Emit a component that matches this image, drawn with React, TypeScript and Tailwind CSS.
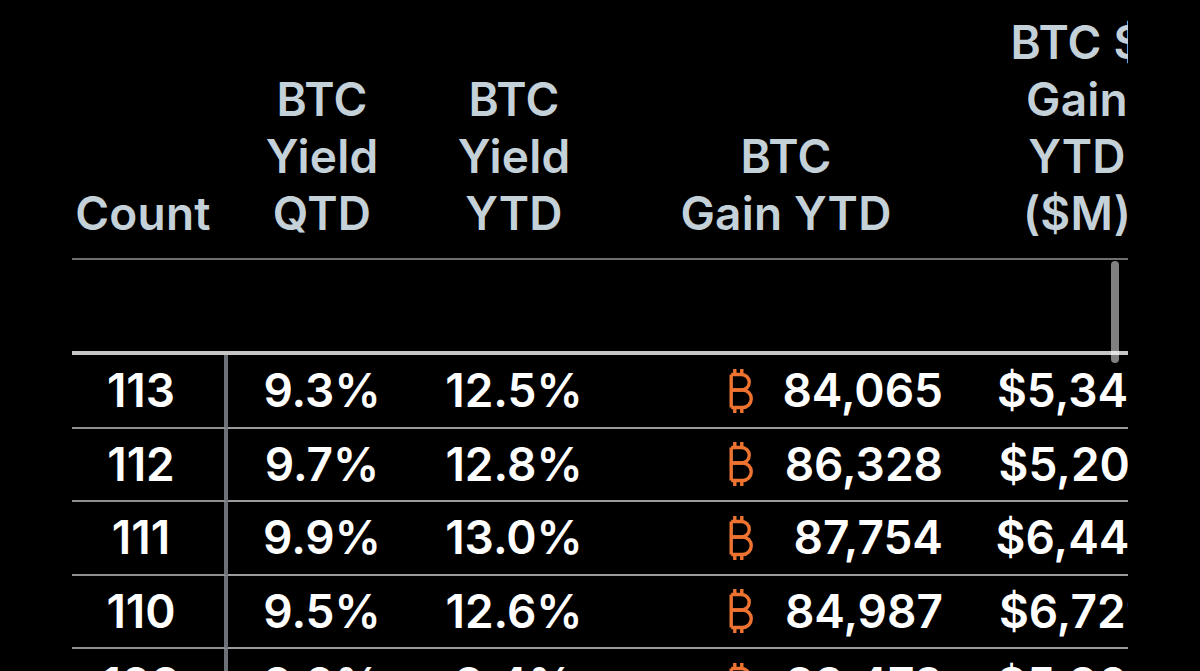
import React from "react";

const rows = [
  { count: "113", qtd: "9.3%", ytd: "12.5%", gain: "84,065", usd: "$5,345" },
  { count: "112", qtd: "9.7%", ytd: "12.8%", gain: "86,328", usd: "$5,207" },
  { count: "111", qtd: "9.9%", ytd: "13.0%", gain: "87,754", usd: "$6,445" },
  { count: "110", qtd: "9.5%", ytd: "12.6%", gain: "84,987", usd: "$6,729" },
  { count: "109", qtd: "9.0%", ytd: "8.4%", gain: "83,473", usd: "$5,903" },
];

function BitcoinMark() {
  return (
    <svg width="25" height="44" viewBox="0 0 25 44" fill="none" stroke="#ee7330" strokeWidth="3.4" strokeLinecap="butt" strokeLinejoin="round">
      <path d="M2.2 5.5 V38.5" />
      <path d="M2.2 5.5 H12.5 a7.75 7.75 0 0 1 0 15.5 H2.2" />
      <path d="M2.2 21 H13.5 a8.75 8.75 0 0 1 0 17.5 H2.2" />
      <path d="M5.8 0 V5.5 M12.8 0 V5.5 M5.8 38.5 V44 M12.8 38.5 V44" />
    </svg>
  );
}

const grid = "grid grid-cols-[156px_188px_196px_348px_234px] w-[1122px]";

export default function App() {
  return (
    <div className="relative w-[1200px] h-[671px] overflow-hidden bg-black font-['Inter','Noto_Sans',sans-serif]">
      <div className="ml-[72px] w-[1056px] overflow-hidden">
        {/* header */}
        <div className={`${grid} h-[258px] items-end pb-[16px] text-[46px] leading-[57px] font-semibold tracking-[0.2px] text-[#c4d1d9] text-center`}>
          <div className="pr-[14px]">Count</div>
          <div>BTC<br />Yield<br />QTD</div>
          <div>BTC<br />Yield<br />YTD</div>
          <div>BTC<br />Gain YTD</div>
          <div className="whitespace-nowrap">BTC $<br />Gain<br />YTD<br />($M)</div>
        </div>
        {/* filter row */}
        <div className="w-[1122px] h-[97px] border-t-2 border-b-4 border-t-[#6f6f6f] border-b-[#c6c6c6]" />
        {/* data rows */}
        {rows.map((r) => (
          <div key={r.count} className={`${grid} h-[73.5px] text-[46px] font-semibold text-white`}>
            <div className="flex items-center justify-center pr-[14px] border-r-4 border-r-[#6b7177] border-b-2 border-b-[#8f8f8f]">
              {r.count}
            </div>
            <div className="flex items-center justify-center border-b-2 border-b-[#9b9b9b]">{r.qtd}</div>
            <div className="flex items-center justify-center border-b-2 border-b-[#9b9b9b]">{r.ytd}</div>
            <div className="flex items-center justify-end pr-[17px] border-b-2 border-b-[#9b9b9b]">
              <BitcoinMark />
              <span className="ml-[24px] w-[165px] text-right">{r.gain}</span>
            </div>
            <div className="flex items-center justify-center border-b-2 border-b-[#9b9b9b]">{r.usd}</div>
          </div>
        ))}
      </div>
      {/* scrollbar thumb */}
      <div className="absolute left-[1111px] top-[261px] w-[8px] h-[102px] rounded-full bg-white/50" />
    </div>
  );
}
